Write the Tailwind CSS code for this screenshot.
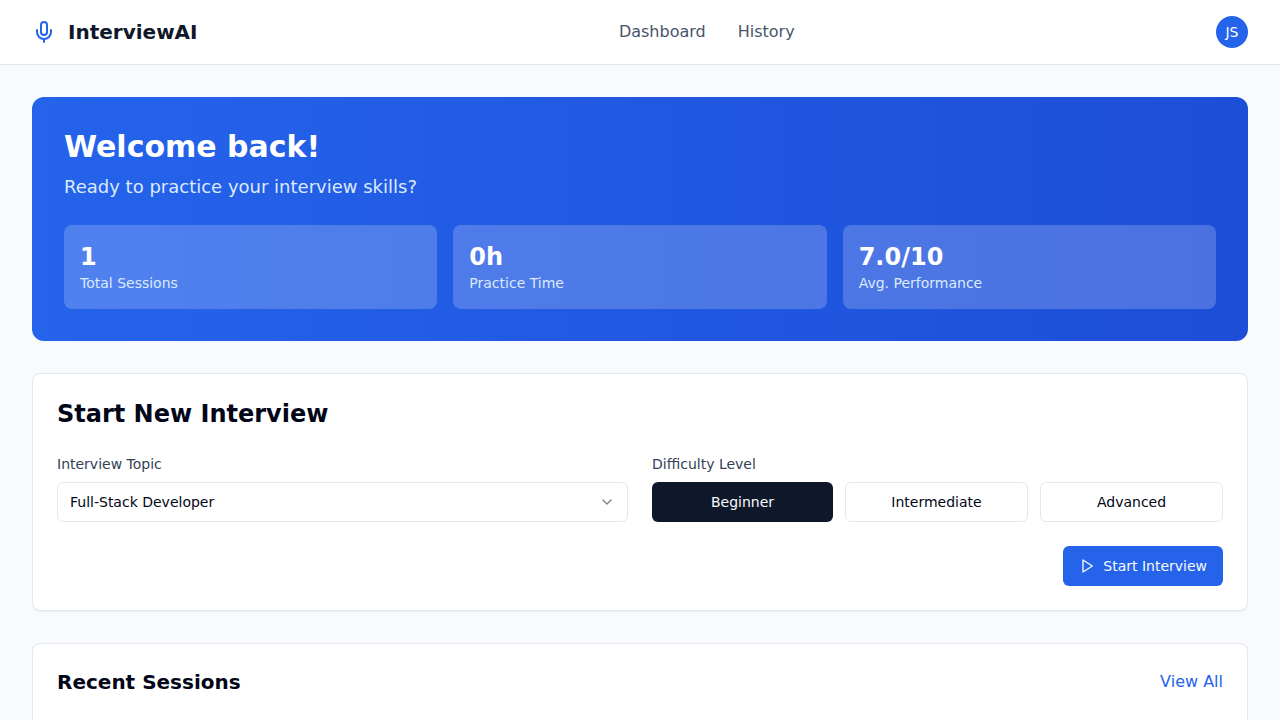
<!DOCTYPE html>
<html lang="en">
<head>
<meta charset="utf-8">
<meta name="viewport" content="width=device-width, initial-scale=1">
<title>InterviewAI</title>
<script src="https://cdn.jsdelivr.net/npm/@tailwindcss/browser@4"></script>
</head>
<body class="min-h-screen overflow-x-hidden bg-[#f8fafc] font-['DejaVu_Sans',sans-serif] text-[#020617]">
  <header class="border-b border-[#e2e8f0] bg-white">
    <div class="flex h-16 items-center justify-between px-8">
      <div class="flex items-center gap-3">
        <svg class="size-6 text-[#2563eb]" viewBox="0 0 24 24" fill="none" stroke="currentColor" stroke-width="2" stroke-linecap="round" stroke-linejoin="round" aria-hidden="true">
          <path d="M12 2a3 3 0 0 0-3 3v7a3 3 0 0 0 6 0V5a3 3 0 0 0-3-3Z"/>
          <path d="M19 10v2a7 7 0 0 1-14 0v-2"/>
          <path d="M12 19v3"/>
        </svg>
        <span class="text-xl font-bold text-[#0f172a]">InterviewAI</span>
      </div>
      <nav class="flex items-center gap-8 text-[#475569]">
        <a href="#dashboard" class="hover:text-[#0f172a]">Dashboard</a>
        <a href="#history" class="hover:text-[#0f172a]">History</a>
      </nav>
      <button type="button" aria-label="Account: JS" class="flex size-8 items-center justify-center rounded-full bg-[#2563eb] text-sm text-white">JS</button>
    </div>
  </header>

  <main class="flex flex-col gap-8 p-8">
    <section class="rounded-xl bg-linear-to-r/srgb from-[#2563eb] to-[#1d4ed8] p-8 text-white">
      <h1 class="mb-2 text-3xl font-bold">Welcome back!</h1>
      <p class="mb-6 text-lg text-[#dbeafe]">Ready to practice your interview skills?</p>
      <div class="grid grid-cols-3 gap-4">
        <div class="rounded-lg bg-white/20 p-4">
          <div class="text-2xl font-bold">1</div>
          <div class="text-sm text-[#dbeafe]">Total Sessions</div>
        </div>
        <div class="rounded-lg bg-white/20 p-4">
          <div class="text-2xl font-bold">0h</div>
          <div class="text-sm text-[#dbeafe]">Practice Time</div>
        </div>
        <div class="rounded-lg bg-white/20 p-4">
          <div class="text-2xl font-bold">7.0/10</div>
          <div class="text-sm text-[#dbeafe]">Avg. Performance</div>
        </div>
      </div>
    </section>

    <section class="rounded-lg border border-[#e2e8f0] bg-white p-6 shadow-[0_1px_2px_0_rgb(0_0_0/0.05)]">
      <h2 class="mb-6 text-2xl font-bold">Start New Interview</h2>
      <form class="flex flex-col gap-6">
        <div class="grid grid-cols-2 gap-6">
          <div>
            <label for="topic" class="mb-2 block text-sm text-[#334155]">Interview Topic</label>
            <div class="relative">
              <select id="topic" class="h-10 w-full appearance-none rounded-md border border-[#e2e8f0] bg-white px-3 text-sm">
                <option>Full-Stack Developer</option>
              </select>
              <svg class="pointer-events-none absolute inset-y-0 right-3 my-auto mr-px size-4 opacity-50" viewBox="0 0 24 24" fill="none" stroke="currentColor" stroke-width="2" stroke-linecap="round" stroke-linejoin="round" aria-hidden="true">
                <path d="m6 9 6 6 6-6"/>
              </svg>
            </div>
          </div>
          <div role="group" aria-labelledby="difficulty">
            <div id="difficulty" class="mb-2 text-sm text-[#334155]">Difficulty Level</div>
            <div class="flex gap-3 text-sm">
              <button type="button" aria-pressed="true" class="h-10 flex-1 rounded-md bg-[#0f172a] px-4 text-[#f8fafc]">Beginner</button>
              <button type="button" aria-pressed="false" class="h-10 flex-1 rounded-md border border-[#e2e8f0] bg-white px-4">Intermediate</button>
              <button type="button" aria-pressed="false" class="h-10 flex-1 rounded-md border border-[#e2e8f0] bg-white px-4">Advanced</button>
            </div>
          </div>
        </div>
        <div class="flex justify-end">
          <button type="button" class="flex h-10 items-center gap-2 rounded-md bg-[#2563eb] px-4 text-sm text-[#f8fafc]">
            <svg class="size-4" viewBox="0 0 24 24" fill="none" stroke="currentColor" stroke-width="2" stroke-linecap="round" stroke-linejoin="round" aria-hidden="true">
              <path d="M6 3l14 9-14 9V3z"/>
            </svg>
            Start Interview
          </button>
        </div>
      </form>
    </section>

    <section class="min-h-48 rounded-lg border border-[#e2e8f0] bg-white p-6 shadow-[0_1px_2px_0_rgb(0_0_0/0.05)]">
      <div class="flex items-center justify-between">
        <h2 class="text-xl font-bold">Recent Sessions</h2>
        <a href="#sessions" class="text-[#2563eb]">View All</a>
      </div>
    </section>
  </main>
</body>
</html>
